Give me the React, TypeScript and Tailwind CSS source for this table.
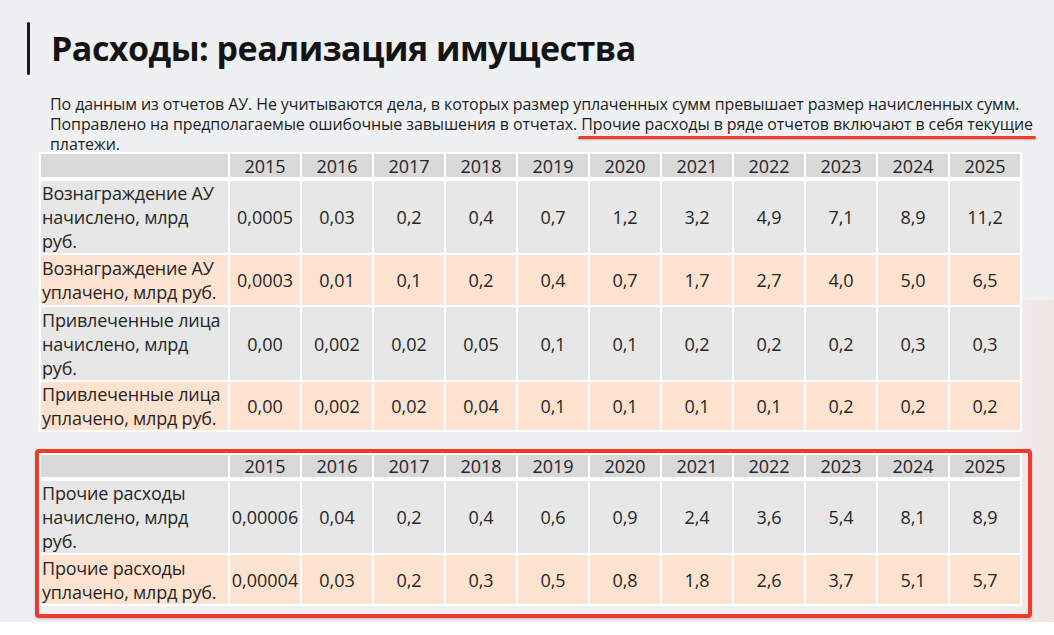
const years = ["2015", "2016", "2017", "2018", "2019", "2020", "2021", "2022", "2023", "2024", "2025"];

type Row = {
  label: string[];
  values: string[];
  tone: "gray" | "peach";
  h: string;
};

const topRows: Row[] = [
  {
    label: ["Вознаграждение АУ", "начислено, млрд", "руб."],
    values: ["0,0005", "0,03", "0,2", "0,4", "0,7", "1,2", "3,2", "4,9", "7,1", "8,9", "11,2"],
    tone: "gray",
    h: "h-[75px]",
  },
  {
    label: ["Вознаграждение АУ", "уплачено, млрд руб."],
    values: ["0,0003", "0,01", "0,1", "0,2", "0,4", "0,7", "1,7", "2,7", "4,0", "5,0", "6,5"],
    tone: "peach",
    h: "h-[52px]",
  },
  {
    label: ["Привлеченные лица", "начислено, млрд", "руб."],
    values: ["0,00", "0,002", "0,02", "0,05", "0,1", "0,1", "0,2", "0,2", "0,2", "0,3", "0,3"],
    tone: "gray",
    h: "h-[75px]",
  },
  {
    label: ["Привлеченные лица", "уплачено, млрд руб."],
    values: ["0,00", "0,002", "0,02", "0,04", "0,1", "0,1", "0,1", "0,1", "0,2", "0,2", "0,2"],
    tone: "peach",
    h: "h-[50px]",
  },
];

const bottomRows: Row[] = [
  {
    label: ["Прочие расходы", "начислено, млрд", "руб."],
    values: ["0,00006", "0,04", "0,2", "0,4", "0,6", "0,9", "2,4", "3,6", "5,4", "8,1", "8,9"],
    tone: "gray",
    h: "h-[73px]",
  },
  {
    label: ["Прочие расходы", "уплачено, млрд руб."],
    values: ["0,00004", "0,03", "0,2", "0,3", "0,5", "0,8", "1,8", "2,6", "3,7", "5,1", "5,7"],
    tone: "peach",
    h: "h-[51px]",
  },
];

function DataTable({ rows, headH }: { rows: Row[]; headH: string }) {
  return (
    <table className="table-fixed border-collapse text-[18px] leading-[24px] text-[#262626]">
      <colgroup>
        <col className="w-[189px]" />
        {years.map((y) => (
          <col key={y} className="w-[72px]" />
        ))}
      </colgroup>
      <thead>
        <tr className={`${headH} bg-[#d9d9d9]`}>
          <th className="border-2 border-b-[4px] border-white" />
          {years.map((y) => (
            <th key={y} className="border-2 border-b-[4px] border-white text-center align-bottom font-normal leading-[22px]">
              {y}
            </th>
          ))}
        </tr>
      </thead>
      <tbody>
        {rows.map((r, i) => (
          <tr key={i} className={`${r.h} ${r.tone === "gray" ? "bg-[#e7e7e7]" : "bg-[#fde3cf]"}`}>
            <td className="border-2 border-white pl-[1px] text-left align-middle whitespace-nowrap tracking-[-0.2px]">
              {r.label.map((l, k) => (
                <div key={k}>{l}</div>
              ))}
            </td>
            {r.values.map((v, k) => (
              <td key={k} className="border-2 border-white text-center align-middle whitespace-nowrap">
                {v}
              </td>
            ))}
          </tr>
        ))}
      </tbody>
    </table>
  );
}

export default function App() {
  return (
    <div
      className="relative h-[635px] w-[1054px] overflow-hidden bg-[#eef0f2]"
      style={{ fontFamily: '"Open Sans", "Noto Sans", sans-serif' }}
    >
      {/* faint texture on the right */}
      <div className="pointer-events-none absolute right-0 top-[300px] h-[330px] w-[60px] bg-gradient-to-l from-[#f1e4e1] to-transparent" />

      <div className="relative">
        <div className="flex items-start pl-[27px] pt-[22px]">
          <div className="h-[53px] w-[3px] rounded-sm bg-[#1c1c1c]" />
          <h1 className="ml-[21px] mt-[5px] text-[34px] font-bold leading-[42px] tracking-[-0.5px] text-[#141414]">
            Расходы: реализация имущества
          </h1>
        </div>

        <p className="mt-[19px] pl-[50px] pr-[6px] text-[16px] leading-[20px] tracking-[-0.1px] text-[#1e1e1e]">
          По данным из отчетов АУ. Не учитываются дела, в которых размер уплаченных сумм превышает размер начисленных сумм.
          <br />
          Поправлено на предполагаемые ошибочные завышения в отчетах.{" "}
          <span className="relative">
            Прочие расходы в ряде отчетов включают в себя текущие
            <span className="absolute -bottom-[4px] left-[-3px] right-[-3px] h-[3px] rounded-full bg-[#f23a2d] shadow-[0_1px_2px_rgba(0,0,0,0.25)]" />
          </span>
          <br />
          платежи.
        </p>

        <div className="ml-[39px] -mt-[2px]">
          <DataTable rows={topRows} headH="h-[26px]" />
        </div>

        <div className="ml-[35px] mt-[17px] w-[997px] rounded-[4px] border-[4px] border-[#f0392b] pb-[8px] shadow-[0_1px_3px_rgba(0,0,0,0.2)]">
          <DataTable rows={bottomRows} headH="h-[23px]" />
        </div>
      </div>

      <div className="absolute bottom-0 left-0 h-[13px] w-full bg-white" />
    </div>
  );
}
